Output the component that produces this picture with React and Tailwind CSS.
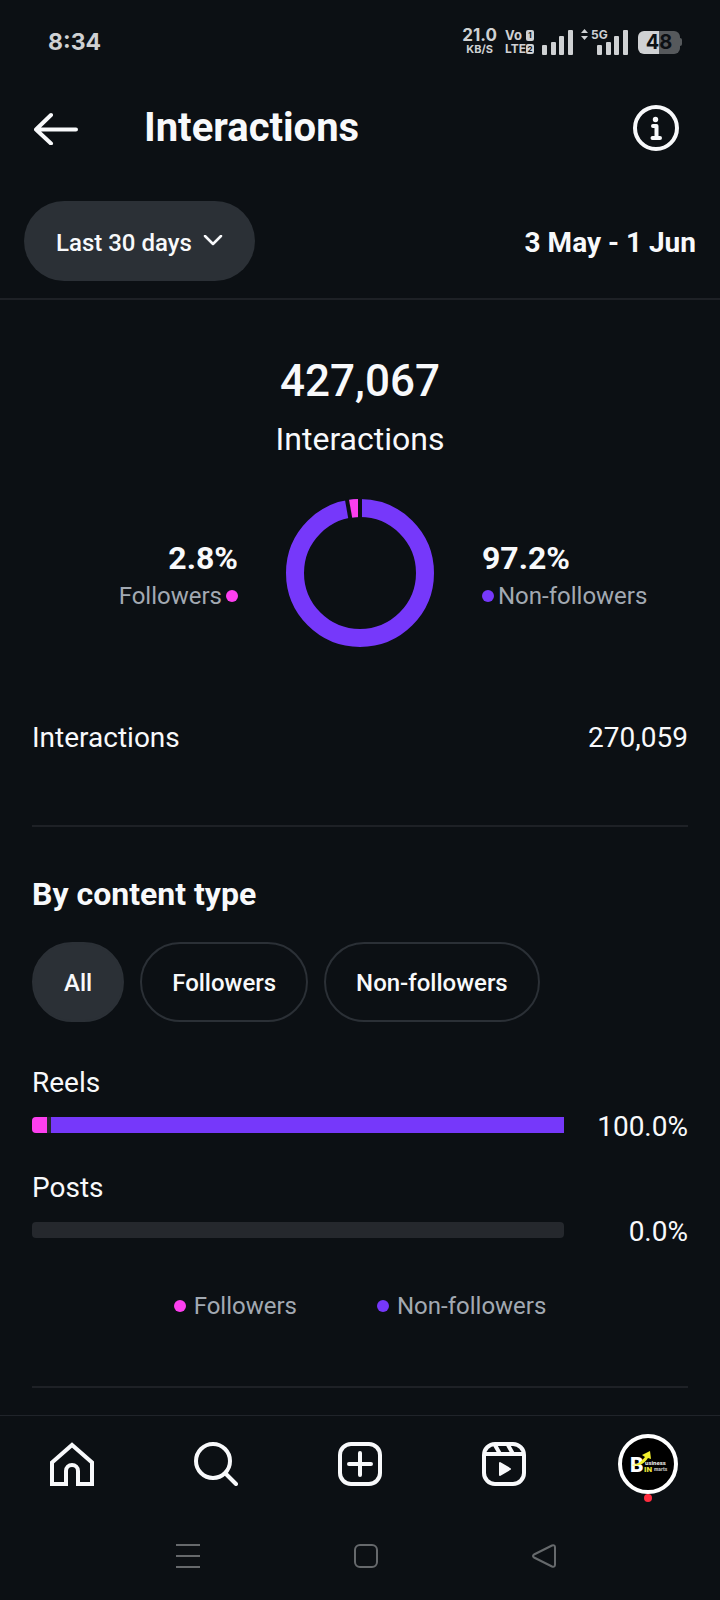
import { useState } from 'react';

const FILTERS = ['All', 'Followers', 'Non-followers'];

const CONTENT = [
  { name: 'Reels', value: '100.0%', followers: 2.8, nonFollowers: 96.5 },
  { name: 'Posts', value: '0.0%', followers: 0, nonFollowers: 0 },
];

const Signal = () => (
  <svg width="31" height="25" viewBox="0 0 31 25" fill="currentColor" aria-hidden="true">
    <rect x="0" y="15" width="5" height="10" rx="1" />
    <rect x="9" y="12" width="5" height="13" rx="1" />
    <rect x="17" y="6" width="5" height="19" rx="1" />
    <rect x="26" y="0" width="5" height="25" rx="1" />
  </svg>
);

const StatusBar = () => (
  <div className="flex h-[84px] items-center justify-between pl-12 pr-[38px] font-[Inter,sans-serif] text-[#cfd1d3]">
    <span className="text-[23px] font-bold">8:34</span>
    <div className="flex items-center">
      <div className="flex flex-col items-center font-bold">
        <span className="text-[17px] leading-[14px]">21.0</span>
        <span className="text-[11px] leading-[14px]">KB/S</span>
      </div>
      <div className="ml-2 flex flex-col font-bold">
        <span className="flex items-center justify-between text-[13px] leading-[14px]">
          Vo
          <span className="flex h-[11px] w-2 items-center justify-center rounded-xs bg-[#cfd1d3] text-[8px] text-[#0c1014]">1</span>
        </span>
        <span className="flex items-center text-[12px] leading-[14px]">
          LTE
          <span className="flex h-[10px] w-2 items-center justify-center rounded-xs bg-[#cfd1d3] text-[8px] text-[#0c1014]">2</span>
        </span>
      </div>
      <div className="ml-2"><Signal /></div>
      <div className="relative ml-6">
        <Signal />
        <span className="absolute -left-4 -top-px flex items-center gap-[3px] bg-[#0c1014] text-[12px] font-bold leading-[11px]">
          <svg width="7" height="11" viewBox="0 0 7 11" fill="currentColor" aria-hidden="true">
            <path d="M0 4 3.5 0 7 4zM0 7l3.5 4L7 7z" />
          </svg>
          5G
        </span>
      </div>
      <div className="ml-[10px] flex items-center">
        <span className="flex h-[23px] w-[42px] items-center justify-center rounded-md bg-linear-to-r from-[#cfd1d3] from-50% to-[#56595c] to-50% text-xl font-bold text-[#0c1014]">
          48
        </span>
        <span className="h-2 w-[2px] rounded-r-xs bg-[#56595c]" />
      </div>
    </div>
  </div>
);

const Header = () => (
  <header className="flex h-[88px] items-center pl-[34px] pr-[41px]">
    <button aria-label="Back">
      <svg width="44" height="34" viewBox="0 0 44 34" fill="none" stroke="currentColor" strokeWidth="4" strokeLinecap="round" strokeLinejoin="round">
        <path d="M17 4 2 18.500 17 32.500M2 18.500h40" />
      </svg>
    </button>
    <h1 className="ml-[66px] flex-1 text-[40px] font-bold leading-[48px]">Interactions</h1>
    <button aria-label="About interactions">
      <svg width="46" height="46" viewBox="0 0 46 46" fill="none" stroke="currentColor" strokeWidth="4" strokeLinecap="round" strokeLinejoin="round">
        <circle cx="23" cy="23" r="21" />
        <circle cx="22.5" cy="14.5" r="2.7" fill="currentColor" stroke="none" />
        <path d="M20 21h3.5v12M19.5 33h7.5" />
      </svg>
    </button>
  </header>
);

const Donut = () => (
  <svg width="148" height="148" viewBox="-74 -74 148 148" fill="none" role="img" aria-label="2.8% followers, 97.2% non-followers">
    <circle r="65" stroke="#7638fa" strokeWidth="18" />
    <circle r="65" stroke="#fd3fef" strokeWidth="18" pathLength="100" strokeDasharray="2.8 97.2" transform="rotate(-100.08)" />
    <path d="M0-54v-21" stroke="#0c1014" strokeWidth="4" />
    <path d="M0-54v-21" stroke="#0c1014" strokeWidth="4" transform="rotate(-10.08)" />
  </svg>
);

const Dot = ({ className }) => <span className={`size-3 shrink-0 rounded-full ${className}`} />;

const NavIcon = ({ children }) => (
  <svg width="44" height="44" viewBox="0 0 44 44" fill="none" stroke="currentColor" strokeWidth="4" strokeLinecap="round" strokeLinejoin="round">
    {children}
  </svg>
);

const Avatar = () => (
  <span className="relative">
    <svg width="60" height="60" viewBox="0 0 60 60" fontFamily="Roboto, sans-serif" fontWeight="900">
      <circle cx="30" cy="30" r="28" fill="#000" stroke="#fff" strokeWidth="4" />
      <text x="12" y="38" fontSize="21" fill="#fff">B</text>
      <text x="27" y="31" fontSize="6" fill="#ddd">usiness</text>
      <text x="26" y="38" fontSize="8" fill="#e8e337">IN</text>
      <text x="36" y="37" fontSize="5" fill="#bbb">marts</text>
      <path d="M13 31c6 0 10-3 14-8l-3-2 8-4 1 8-3-1c-4 6-9 9-17 7z" fill="#f2ee2c" />
    </svg>
    <span className="absolute -bottom-2 left-1/2 size-2 -translate-x-1/2 rounded-full bg-[#ff2c3e]" />
  </span>
);

const BottomNav = () => (
  <nav className="grid h-[97px] grid-cols-5 place-items-center border-t border-[#20242a]">
    <a href="#home" aria-label="Home">
      <NavIcon>
        <path strokeLinejoin="miter" d="M2 20.500 22 3l20 17.500V42H28V29a6 6 0 0 0-12 0v13H2z" />
      </NavIcon>
    </a>
    <a href="#search" aria-label="Search">
      <NavIcon>
        <circle cx="19" cy="19" r="17" />
        <path d="m32 32 10 10" />
      </NavIcon>
    </a>
    <a href="#create" aria-label="Create">
      <NavIcon>
        <rect x="2" y="2" width="40" height="40" rx="11" />
        <path d="M22 11v22M11 22h22" />
      </NavIcon>
    </a>
    <a href="#reels" aria-label="Reels">
      <NavIcon>
        <rect x="2" y="2" width="40" height="40" rx="11" />
        <path d="M3 12h38M13 3l5 9M26 3l5 9" />
        <path d="M18 21v12l10-6z" fill="currentColor" strokeWidth="2" />
      </NavIcon>
    </a>
    <a href="#profile" aria-label="Profile" className="flex"><Avatar /></a>
  </nav>
);

const SystemNav = () => (
  <div className="flex h-[88px] items-center justify-center gap-[154px] pl-3 text-[#66696c]">
    <button aria-label="Recent apps">
      <svg width="24" height="24" fill="none" stroke="currentColor" strokeWidth="2">
        <path d="M0 1h24M0 12h24M0 23h24" />
      </svg>
    </button>
    <button aria-label="Home screen">
      <svg width="24" height="24" fill="none" stroke="currentColor" strokeWidth="2">
        <rect x="1" y="1" width="22" height="22" rx="5" />
      </svg>
    </button>
    <button aria-label="Go back">
      <svg width="24" height="24" fill="none" stroke="currentColor" strokeWidth="2" strokeLinejoin="round">
        <path d="M20 1.500 2 10.500q-2 1.500 0 3L20 22.500q3 1 3-2v-17q0-3-3-2z" />
      </svg>
    </button>
  </div>
);

export default function App() {
  const [filter, setFilter] = useState('All');

  return (
    <div className="flex min-h-screen flex-col bg-[#0c1014] font-[Roboto,sans-serif] text-[#f8f9fb]">
      <StatusBar />
      <Header />

      {/* Date range */}
      <div className="flex items-center justify-between border-b-2 border-[#1e2126] px-6 pb-[17px] pt-[29px]">
        <button className="flex h-20 items-center gap-[11px] rounded-full bg-[#2b3036] px-8 text-2xl font-medium">
          <span className="pt-[3px]">Last 30 days</span>
          <svg width="20" height="12" viewBox="0 0 20 12" fill="none" stroke="currentColor" strokeWidth="2.500" strokeLinecap="round" strokeLinejoin="round">
            <path d="m2 1 8 8 8-8" />
          </svg>
        </button>
        <span className="pt-[3px] text-[28px] font-bold">3 May - 1 Jun</span>
      </div>

      <main className="flex-1 px-8 pt-[55px]">
        {/* Total */}
        <div className="text-center">
          <p className="text-[44px] font-medium leading-[52px]">427,067</p>
          <p className="mt-3 text-[32px] leading-[40px]">Interactions</p>
        </div>

        <div className="mt-10 flex items-center gap-12">
          <div className="flex flex-1 flex-col items-end pt-[6px]">
            <span className="text-[32px] font-bold leading-[40px]">2.8%</span>
            <span className="flex items-center gap-1 text-2xl leading-9 text-[#a2a9b2]">
              Followers
              <Dot className="bg-[#fd3fef]" />
            </span>
          </div>
          <Donut />
          <div className="flex flex-1 flex-col items-start pt-[6px]">
            <span className="text-[32px] font-bold leading-[40px]">97.2%</span>
            <span className="flex items-center gap-1 text-2xl leading-9 text-[#a2a9b2]">
              <Dot className="bg-[#7638fa]" />
              Non-followers
            </span>
          </div>
        </div>

        <div className="mt-[71px] flex justify-between text-[28px] leading-[40px]">
          <span>Interactions</span>
          <span>270,059</span>
        </div>

        <hr className="mt-[67px] border-t-2 border-[#1e2126]" />

        {/* Content type */}
        <h2 className="mt-[47px] text-[32px] font-bold leading-[40px]">By content type</h2>
        <div className="mt-7 flex gap-4">
          {FILTERS.map((f) => (
            <button key={f} onClick={() => setFilter(f)}
              className={`h-20 rounded-full border-2 px-[30px] pt-[2px] text-2xl font-medium ${
                filter === f ? 'border-[#2b3036] bg-[#2b3036]' : 'border-[#2b3036]'
              }`}>
              {f}
            </button>
          ))}
        </div>

        <div className="mt-[41px] space-y-[21px] text-[28px] leading-[40px]">
          {CONTENT.map((c) => (
            <div key={c.name}>
              <p>{c.name}</p>
              <div className="mt-1 flex items-start">
                <div className={`mt-[10px] flex h-4 flex-1 justify-between overflow-hidden bg-[#25282d] ${
                  c.nonFollowers ? 'rounded-l-sm' : 'rounded-sm'
                }`}>
                  <span className="bg-[#fd3fef]" style={{ width: `${c.followers}%` }} />
                  <span className="bg-[#7638fa]" style={{ width: `${c.nonFollowers}%` }} />
                </div>
                <span className="w-[124px] text-right">{c.value}</span>
              </div>
            </div>
          ))}
        </div>

        <div className="mt-9 flex justify-center gap-20 text-2xl leading-9 text-[#a2a9b2]">
          <span className="flex items-center gap-2"><Dot className="bg-[#fd3fef]" />Followers</span>
          <span className="flex items-center gap-2"><Dot className="bg-[#7638fa]" />Non-followers</span>
        </div>

        <hr className="mt-[62px] border-t-2 border-[#1e2126]" />
      </main>

      <BottomNav />
      <SystemNav />
    </div>
  );
}
